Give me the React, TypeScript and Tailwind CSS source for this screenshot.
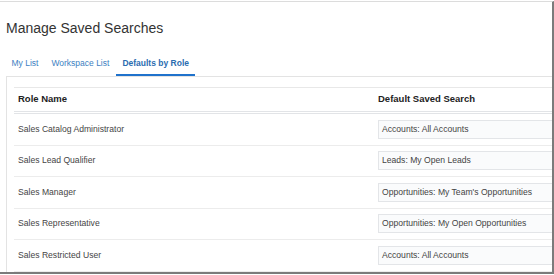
import React from "react";

const rows = [
  ["Sales Catalog Administrator", "Accounts: All Accounts"],
  ["Sales Lead Qualifier", "Leads: My Open Leads"],
  ["Sales Manager", "Opportunities: My Team's Opportunities"],
  ["Sales Representative", "Opportunities: My Open Opportunities"],
  ["Sales Restricted User", "Accounts: All Accounts"],
];

export default function App() {
  return (
    <div
      className="w-[554px] h-[275px] bg-white"
      style={{ fontFamily: '"Liberation Sans", Arial, sans-serif' }}
    >
      <div className="mt-[1px] h-[273px] w-[554px] border-t border-t-[#dcdcdc] border-r-2 border-r-[#7b7b7b] border-b-2 border-b-[#7b7b7b] overflow-hidden flex flex-col">
        <div className="pl-[6px] pt-[17.5px] text-[14px] leading-4 text-[#333333]">
          Manage Saved Searches
        </div>
        <div className="mt-[16.5px] ml-[5px] flex text-[8.5px] leading-[11px]">
          <div className="px-[6.5px] pt-[6px] pb-[5px] border-b-2 border-transparent text-[#3d7fc2]">
            My List
          </div>
          <div className="px-[6.5px] pt-[6px] pb-[5px] border-b-2 border-transparent text-[#3d7fc2]">
            Workspace List
          </div>
          <div className="px-[6.5px] pt-[6px] pb-[5px] border-b-2 border-[#1f72cc] font-bold text-[#2b6cb0]">
            Defaults by Role
          </div>
        </div>
        <div className="ml-[6px] flex-1 border-l border-t border-[#e3e3e3] pt-[10px] pl-[7px]">
          <div className="border-t border-[#e8e8e8]">
            <div className="flex h-[26px] items-center border-b-[3px] border-double border-[#e2e4e7] text-[9.5px] font-bold text-[#222222]">
              <div className="w-[364px] shrink-0 pl-[4px]">Role Name</div>
              <div className="shrink-0">Default Saved Search</div>
            </div>
            {rows.map(([role, search]) => (
              <div
                key={role}
                className="flex h-[31.5px] items-center border-b border-[#ececec] text-[8.6px] text-[#454545]"
              >
                <div className="w-[364px] shrink-0 pl-[4px]">{role}</div>
                <div className="h-[19px] w-[220px] shrink-0 flex items-center border border-[#e3e5e8] bg-[#fafbfc] pl-[3px] text-[#444444]">
                  {search}
                </div>
              </div>
            ))}
          </div>
        </div>
      </div>
    </div>
  );
}
